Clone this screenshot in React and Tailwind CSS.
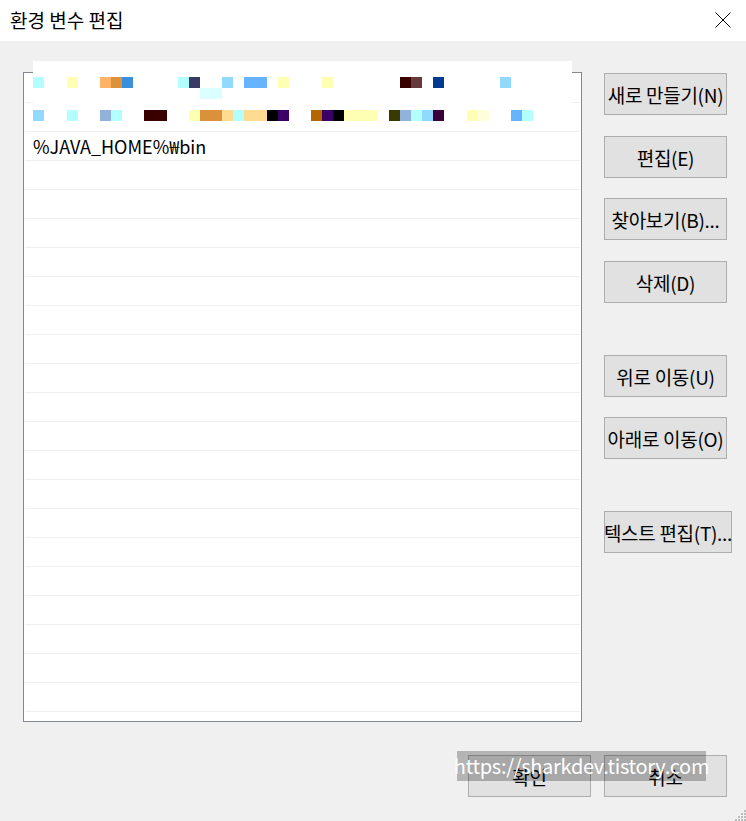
const font = { fontFamily: '"Noto Sans CJK KR", "Noto Sans", sans-serif' };

// redaction mosaic blocks: [x, y, w, color] relative to the white overlay
const blocks = [
  [0, 16, 11, "#b3ffff"],
  [34, 16, 11, "#ffffb3"],
  [67, 16, 11, "#ffb366"],
  [78, 16, 11, "#dd913b"],
  [89, 16, 11, "#3a8fdd"],
  [145, 16, 11, "#b3ffff"],
  [156, 16, 11, "#3a3a66"],
  [189, 16, 11, "#91d9ff"],
  [211, 16, 23, "#66b3ff"],
  [245, 16, 11, "#ffffb3"],
  [289, 16, 11, "#ffffb3"],
  [367, 16, 11, "#3a0000"],
  [378, 16, 11, "#663a3a"],
  [400, 16, 11, "#003a91"],
  [467, 16, 11, "#91d9ff"],
  [167, 27, 22, "#dbffff"],
  [0, 49, 11, "#91d9ff"],
  [34, 49, 11, "#b3ffff"],
  [67, 49, 11, "#91b3db"],
  [78, 49, 11, "#b3ffff"],
  [111, 49, 23, "#3a0000"],
  [156, 49, 11, "#ffffb3"],
  [167, 49, 22, "#db913a"],
  [189, 49, 11, "#ffdb91"],
  [200, 49, 11, "#b3ffff"],
  [211, 49, 23, "#ffdb91"],
  [234, 49, 11, "#000000"],
  [245, 49, 11, "#3a0066"],
  [278, 49, 11, "#b66600"],
  [289, 49, 11, "#3a0066"],
  [300, 49, 11, "#000000"],
  [311, 49, 34, "#ffffb3"],
  [356, 49, 11, "#3a3a00"],
  [367, 49, 11, "#91b3db"],
  [378, 49, 11, "#b3ffff"],
  [389, 49, 11, "#91d9ff"],
  [400, 49, 11, "#3a003a"],
  [434, 49, 11, "#ffffb3"],
  [445, 49, 11, "#ffffdb"],
  [478, 49, 11, "#66b3ff"],
  [489, 49, 11, "#b3ffff"],
];

const rows = ["", "", "%JAVA_HOME%₩bin", ...Array(20).fill("")];

function Btn({ children, className = "" }) {
  return (
    <button
      className={`h-[42px] bg-[#e1e1e1] border border-[#adadad] text-[19px] leading-none text-black flex items-center justify-center whitespace-nowrap tracking-[-0.3px] ${className}`}
    >
      {children}
    </button>
  );
}

export default function App() {
  return (
    <div
      className="w-[746px] h-[821px] bg-[#f0f0f0] flex flex-col relative overflow-hidden"
      style={font}
    >
      <div className="h-[41px] bg-white flex items-center justify-between pl-[10px] pr-[15px]">
        <span className="text-[19px] text-black leading-none -mt-[2px]">
          환경 변수 편집
        </span>
        <svg width="16" height="16" viewBox="0 0 16 16" className="-mt-[2px]">
          <path d="M0.5 0.5 L15.5 15.5 M15.5 0.5 L0.5 15.5" stroke="#000" strokeWidth="1" />
        </svg>
      </div>

      <div className="flex pl-[23px] pt-[31px]">
        <div className="relative w-[559px] h-[650px] border border-[#828790] bg-white pt-[1px] px-[1px]">
          <div className="h-full overflow-hidden">
            {rows.map((r, i) => (
              <div
                key={i}
                className="h-[29px] border-b border-[#efefef] flex items-center pl-[8px] text-[18px] text-black leading-none"
              >
                {r}
              </div>
            ))}
          </div>
          <div className="absolute left-[9px] -top-[12px] w-[539px] h-[67px] bg-white">
            {blocks.map(([x, y, w, c], i) => (
              <div
                key={i}
                className="absolute h-[11px]"
                style={{ left: x, top: y, width: w, background: c }}
              />
            ))}
          </div>
        </div>

        <div className="ml-[22px] pt-[1px] flex flex-col">
          <Btn className="w-[123px]">새로 만들기(N)</Btn>
          <Btn className="w-[123px] mt-[21px]">편집(E)</Btn>
          <Btn className="w-[123px] mt-[20px]">찾아보기(B)...</Btn>
          <Btn className="w-[123px] mt-[21px]">삭제(D)</Btn>
          <Btn className="w-[123px] mt-[52px]">위로 이동(U)</Btn>
          <Btn className="w-[123px] mt-[20px]">아래로 이동(O)</Btn>
          <Btn className="w-[128px] mt-[52px]">텍스트 편집(T)...</Btn>
        </div>
      </div>

      <div className="relative flex justify-end gap-[13px] pr-[19px] mt-[33px]">
        <Btn className="w-[123px]">확인</Btn>
        <Btn className="w-[123px]">취소</Btn>
        <div className="absolute left-[457px] -top-[4px] w-[249px] h-[30px] bg-black/25 flex items-center justify-center">
          <span className="text-white text-[20px] leading-none tracking-[-0.3px]">
            https://sharkdev.tistory.com
          </span>
        </div>
      </div>

      <svg
        className="absolute right-0 bottom-0"
        width="12"
        height="12"
        viewBox="0 0 12 12"
      >
        {[
          [9, 0],
          [6, 3],
          [9, 3],
          [3, 6],
          [6, 6],
          [9, 6],
          [0, 9],
          [3, 9],
          [6, 9],
          [9, 9],
        ].map(([x, y], i) => (
          <rect key={i} x={x + 1} y={y + 1} width="2" height="2" fill="#bcbcbc" />
        ))}
      </svg>
    </div>
  );
}
